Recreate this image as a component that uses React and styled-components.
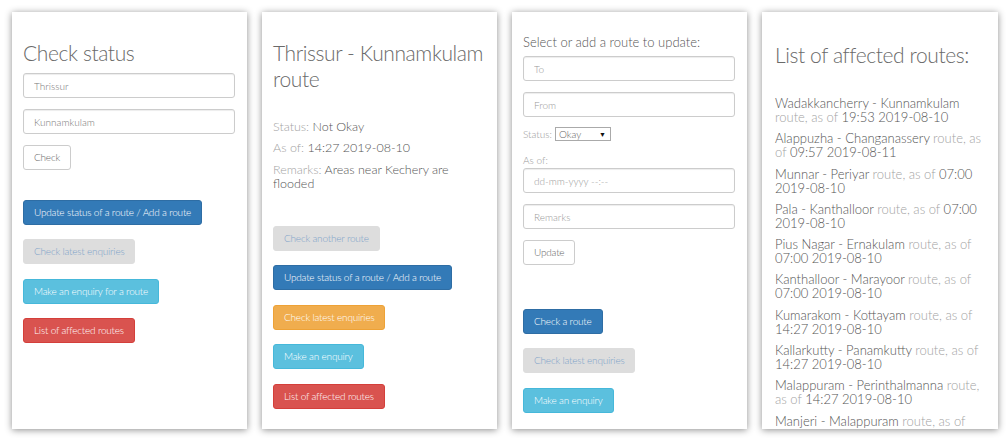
import React from 'react';
import styled, { createGlobalStyle, css } from 'styled-components';

const GlobalStyle = createGlobalStyle`
  html, body { margin: 0; padding: 0; background: #fff; }
  body {
    font-family: Lato, "Helvetica Neue", "Liberation Sans", Arial, sans-serif;
    font-weight: 300;
    color: #555;
  }
  * { box-sizing: border-box; }
`;

const Board = styled.div`
  display: flex;
  align-items: flex-start;
  gap: 15px;
  padding: 12px;
`;

const Screen = styled.section`
  flex: none;
  width: ${(p) => p.$w || 235}px;
  height: 417px;
  padding: ${(p) => p.$top}px 12px 0 ${(p) => p.$left || 11}px;
  background: #fff;
  box-shadow: 0 1px 7px rgba(0, 0, 0, 0.45);
  overflow: hidden;
  display: flex;
  flex-direction: column;
  align-items: flex-start;
`;

const Title = styled.h2`
  margin: 0;
  font-size: 21px;
  line-height: 26px;
  font-weight: 300;
  letter-spacing: -0.4px;
  color: #6a6a6a;
  white-space: ${(p) => (p.$nowrap ? 'nowrap' : 'normal')};
`;

const Keep = styled.span`
  white-space: nowrap;
`;

const Intro = styled.p`
  margin: 0;
  font-size: 13px;
  line-height: 16px;
  color: #555;
`;

const Field = styled.input`
  display: block;
  width: 100%;
  height: 25px;
  margin: ${(p) => p.$mt || 0}px 0 0;
  padding: 0 10px;
  border: 1px solid #ccc;
  border-radius: 3px;
  box-shadow: inset 0 1px 1px rgba(0, 0, 0, 0.075);
  font: inherit;
  font-size: 10px;
  color: #777;
  background: #fff;
  outline: none;
  &::placeholder { color: #999; }
`;

const tones = {
  default: css`background: #fff; border-color: #ccc; color: #666;`,
  primary: css`background: #337ab7; border-color: #2e6da4; color: #fff;`,
  muted: css`background: #ddd; border-color: #ddd; color: #7ea3c9;`,
  info: css`background: #5bc0de; border-color: #46b8da; color: #fff;`,
  danger: css`background: #d9534f; border-color: #d43f3a; color: #fff;`,
  warning: css`background: #f0ad4e; border-color: #eea236; color: #fff;`,
};

const Btn = styled.button`
  flex: none;
  height: 25px;
  margin-top: ${(p) => p.$mt || 0}px;
  padding: 0 10px;
  border: 1px solid;
  border-radius: 3px;
  font: inherit;
  font-size: 10px;
  letter-spacing: -0.2px;
  line-height: 23px;
  white-space: nowrap;
  cursor: pointer;
  ${(p) => tones[p.$tone || 'default']}
`;

const Info = styled.p`
  margin: ${(p) => p.$mt || 0}px 0 0;
  font-size: 12.5px;
  line-height: 14px;
  color: #555;
`;

const Soft = styled.span`
  color: #a3a3a3;
`;

const Strong = styled.span`
  color: #555;
`;

const StatusRow = styled.div`
  display: flex;
  align-items: center;
  gap: 3px;
  margin-top: ${(p) => p.$mt || 0}px;
  height: 14px;
`;

const SmallLabel = styled.span`
  font-size: 10px;
  line-height: 12px;
  color: #999;
  margin-top: ${(p) => p.$mt || 0}px;
`;

const FakeSelect = styled.div`
  display: flex;
  align-items: center;
  justify-content: space-between;
  width: 56px;
  height: 14px;
  padding: 0 4px 0 3px;
  border: 1px solid #aaa;
  background: #fff;
  font-size: 10px;
  color: #666;
`;

const Caret = styled.span`
  font-size: 7px;
  color: #111;
  font-weight: 400;
`;

const RouteList = styled.ul`
  list-style: none;
  margin: 28px 0 0;
  padding: 0;
`;

const RouteItem = styled.li`
  margin-bottom: 7.3px;
  font-size: 13px;
  line-height: 14px;
`;

const Line = styled.span`
  display: block;
  white-space: nowrap;
`;

const routes = [
  [[['Wadakkancherry - Kunnamkulam', 'd']], [['route, as of ', 's'], ['19:53 2019-08-10', 'd']]],
  [[['Alappuzha - Changanassery ', 'd'], ['route, as', 's']], [['of ', 's'], ['09:57 2019-08-11', 'd']]],
  [[['Munnar - Periyar ', 'd'], ['route, as of ', 's'], ['07:00', 'd']], [['2019-08-10', 'd']]],
  [[['Pala - Kanthalloor ', 'd'], ['route, as of ', 's'], ['07:00', 'd']], [['2019-08-10', 'd']]],
  [[['Pius Nagar - Ernakulam ', 'd'], ['route, as of', 's']], [['07:00 2019-08-10', 'd']]],
  [[['Kanthalloor - Marayoor ', 'd'], ['route, as of', 's']], [['07:00 2019-08-10', 'd']]],
  [[['Kumarakom - Kottayam ', 'd'], ['route, as of', 's']], [['14:27 2019-08-10', 'd']]],
  [[['Kallarkutty - Panamkutty ', 'd'], ['route, as of', 's']], [['14:27 2019-08-10', 'd']]],
  [[['Malappuram - Perinthalmanna ', 'd'], ['route,', 's']], [['as of ', 's'], ['14:27 2019-08-10', 'd']]],
  [[['Manjeri - Malappuram ', 'd'], ['route, as of', 's']], [['14:27 2019-08-10', 'd']]],
];

const Seg = ({ text, tone }) => (tone === 's' ? <Soft>{text}</Soft> : <Strong>{text}</Strong>);

export default function App() {
  return (
    <>
      <GlobalStyle />
      <Board>
        <Screen $top={28}>
          <Title>Check status</Title>
          <Field $mt={7} defaultValue="Thrissur" />
          <Field $mt={11} defaultValue="Kunnamkulam" />
          <Btn $mt={11}>Check</Btn>
          <Btn $mt={30} $tone="primary">Update status of a route / Add a route</Btn>
          <Btn $mt={14} $tone="muted">Check latest enquiries</Btn>
          <Btn $mt={15} $tone="info">Make an enquiry for a route</Btn>
          <Btn $mt={14} $tone="danger">List of affected routes</Btn>
        </Screen>

        <Screen $top={28}>
          <Title><Keep>Thrissur - Kunnamkulam</Keep> route</Title>
          <Info $mt={28}><Soft>Status: </Soft>Not Okay</Info>
          <Info $mt={7}><Soft>As of: </Soft>14:27 2019-08-10</Info>
          <Info $mt={8}><Soft>Remarks: </Soft>Areas near Kechery are flooded</Info>
          <Btn $mt={35} $tone="muted">Check another route</Btn>
          <Btn $mt={14} $tone="primary">Update status of a route / Add a route</Btn>
          <Btn $mt={15} $tone="warning">Check latest enquiries</Btn>
          <Btn $mt={14} $tone="info">Make an enquiry</Btn>
          <Btn $mt={15} $tone="danger">List of affected routes</Btn>
        </Screen>

        <Screen $top={22}>
          <Intro>Select or add a route to update:</Intro>
          <Field $mt={6} placeholder="To" />
          <Field $mt={11} placeholder="From" />
          <StatusRow $mt={10}>
            <SmallLabel>Status:</SmallLabel>
            <FakeSelect>
              <span>Okay</span>
              <Caret>▼</Caret>
            </FakeSelect>
          </StatusRow>
          <SmallLabel $mt={13}>As of:</SmallLabel>
          <Field $mt={2} placeholder="dd-mm-yyyy --:--" />
          <Field $mt={11} placeholder="Remarks" />
          <Btn $mt={11}>Update</Btn>
          <Btn $mt={44} $tone="primary">Check a route</Btn>
          <Btn $mt={14} $tone="muted">Check latest enquiries</Btn>
          <Btn $mt={15} $tone="info">Make an enquiry</Btn>
        </Screen>

        <Screen $top={30} $left={13} $w={236}>
          <Title $nowrap>List of affected routes:</Title>
          <RouteList>
            {routes.map((lines, i) => (
              <RouteItem key={i}>
                {lines.map((segs, j) => (
                  <Line key={j}>
                    {segs.map(([t, tone], k) => (
                      <Seg key={k} text={t} tone={tone} />
                    ))}
                  </Line>
                ))}
              </RouteItem>
            ))}
          </RouteList>
        </Screen>
      </Board>
    </>
  );
}
